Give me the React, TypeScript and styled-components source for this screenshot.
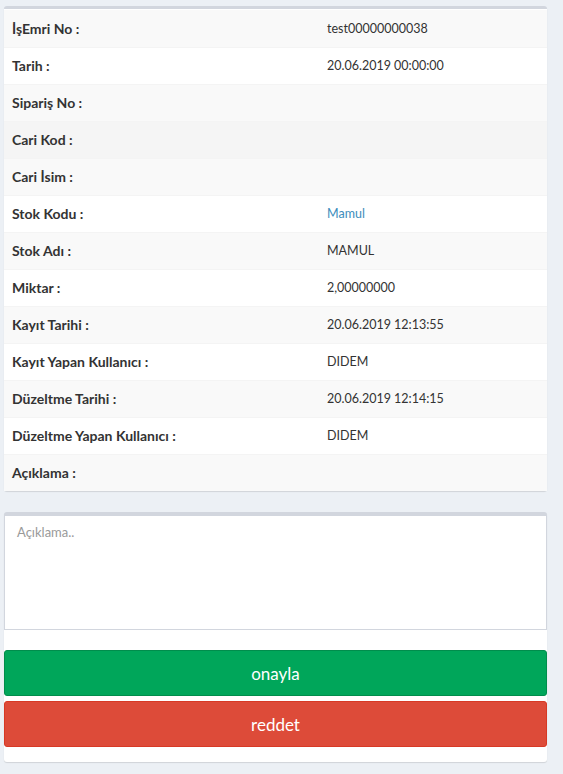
import React from 'react';
import styled, { createGlobalStyle } from 'styled-components';

const GlobalStyle = createGlobalStyle`
  html, body {
    margin: 0;
    padding: 0;
    background: #ecf0f5;
  }
  body {
    font-family: Lato, "Open Sans", sans-serif;
    color: #333;
  }
`;

type Row = { label: string; value?: string; link?: boolean };

const rows: Row[] = [
  { label: 'İşEmri No :', value: 'test00000000038' },
  { label: 'Tarih :', value: '20.06.2019 00:00:00' },
  { label: 'Sipariş No :' },
  { label: 'Cari Kod :' },
  { label: 'Cari İsim :' },
  { label: 'Stok Kodu :', value: 'Mamul', link: true },
  { label: 'Stok Adı :', value: 'MAMUL' },
  { label: 'Miktar :', value: '2,00000000' },
  { label: 'Kayıt Tarihi :', value: '20.06.2019 12:13:55' },
  { label: 'Kayıt Yapan Kullanıcı :', value: 'DIDEM' },
  { label: 'Düzeltme Tarihi :', value: '20.06.2019 12:14:15' },
  { label: 'Düzeltme Yapan Kullanıcı :', value: 'DIDEM' },
  { label: 'Açıklama :' },
];

function App() {
  return (
    <Page>
      <GlobalStyle />
      <Box>
        <Table>
          <tbody>
            {rows.map((r, i) => (
              <TableRow key={r.label} $striped={i % 2 === 0} $hover={i === 3} $first={i === 0}>
                <Label>{r.label}</Label>
                <Value>{r.link ? <ValueLink>{r.value}</ValueLink> : r.value}</Value>
              </TableRow>
            ))}
          </tbody>
        </Table>
      </Box>
      <Box $last>
        <Note placeholder="Açıklama.." />
        <Actions>
          <ActionButton $kind="approve">onayla</ActionButton>
          <ActionButton $kind="reject">reddet</ActionButton>
        </Actions>
      </Box>
    </Page>
  );
}

const Page = styled.div`
  padding: 6px 16px 12px 4px;
`;

const Box = styled.div<{ $last?: boolean }>`
  background: #fff;
  border-top: 3px solid #d2d6de;
  border-radius: 3px;
  box-shadow: 0 1px 1px rgba(0, 0, 0, 0.12);
  margin-bottom: ${(p) => (p.$last ? '0' : '21px')};
  padding-top: ${(p) => (p.$last ? '0' : '1px')};
  padding-bottom: ${(p) => (p.$last ? '15px' : '0')};
`;

const Table = styled.table`
  width: 100%;
  border-collapse: collapse;
  font-size: 12.5px;
`;

const TableRow = styled.tr<{ $striped: boolean; $hover: boolean; $first: boolean }>`
  height: 37px;
  background: ${(p) => (p.$hover ? '#f5f5f5' : p.$striped ? '#f9f9f9' : '#fff')};
  border-top: ${(p) => (p.$first ? 'none' : '1px solid #f4f4f4')};
`;

const Label = styled.td`
  width: 299px;
  padding: 0 8px;
  font-size: 14px;
  font-weight: 700;
  color: #333;
  vertical-align: middle;
`;

const Value = styled.td`
  padding: 0 8px;
  color: #333;
  vertical-align: middle;
`;

const ValueLink = styled.a`
  color: #3c8dbc;
  text-decoration: none;
  cursor: pointer;
`;

const Note = styled.textarea`
  display: block;
  box-sizing: border-box;
  width: 100%;
  height: 115px;
  margin: 0;
  padding: 8px 12px;
  border: 1px solid #d2d6de;
  border-radius: 0;
  resize: none;
  font-family: Lato, "Open Sans", sans-serif;
  font-size: 13px;
  color: #555;
  &::placeholder {
    color: #999;
  }
`;

const Actions = styled.div`
  display: flex;
  flex-direction: column;
  gap: 5px;
  margin-top: 20px;
`;

const ActionButton = styled.button<{ $kind: 'approve' | 'reject' }>`
  height: 46px;
  width: 100%;
  border-radius: 3px;
  border: 1px solid ${(p) => (p.$kind === 'approve' ? '#008d4c' : '#d73925')};
  background: ${(p) => (p.$kind === 'approve' ? '#00a65a' : '#dd4b39')};
  color: #fff;
  font-family: Lato, "Open Sans", sans-serif;
  font-size: 17px;
  cursor: pointer;
`;

export default App;
